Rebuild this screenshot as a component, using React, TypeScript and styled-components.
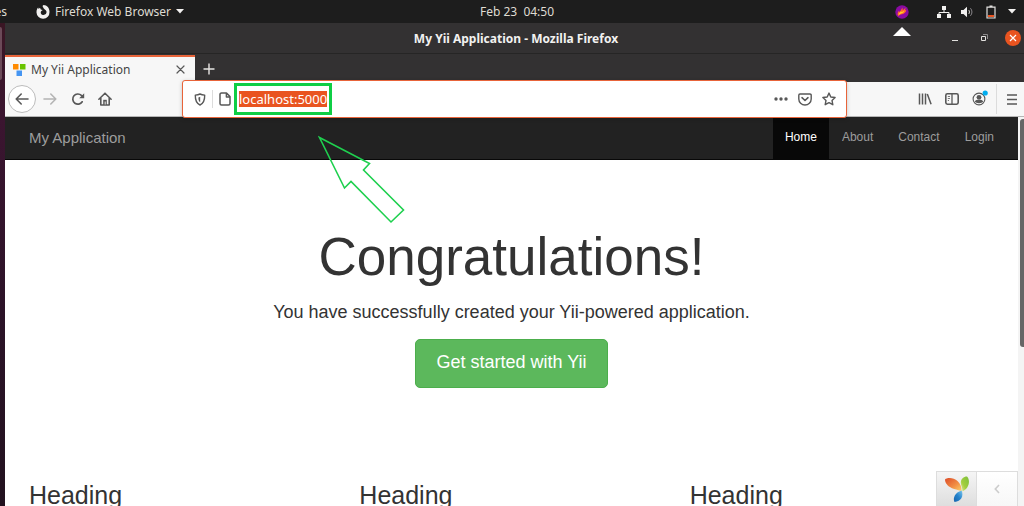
import React from "react";
import styled, { createGlobalStyle } from "styled-components";

const GlobalStyle = createGlobalStyle`
  *, *::before, *::after { box-sizing: border-box; }
  body { margin: 0; background: #fff; }
  button, input { font: inherit; }
`;

const uiFont = `"Noto Sans", "Open Sans", sans-serif`;
const pageFont = `"Liberation Sans", Arial, sans-serif`;

const Desktop = styled.div`
  position: relative;
  display: flex;
  flex-direction: column;
  height: 100vh;
  overflow: hidden;
  font-family: ${uiFont};
  font-size: 12px;
`;

const PanelBar = styled.header`
  display: grid;
  grid-template-columns: 1fr auto 1fr;
  align-items: center;
  flex: none;
  height: 23px;
  padding: 0 8px 0 0;
  background: #1d1d1d;
  color: #dfdbd2;
`;

const PanelSide = styled.div<{ $end?: boolean }>`
  display: flex;
  align-items: center;
  justify-content: ${(p) => (p.$end ? "flex-end" : "flex-start")};
`;

const Activities = styled.span`
  display: flex;
  justify-content: flex-end;
  width: 7px;
  overflow: hidden;
`;

const AppMenu = styled.button`
  display: flex;
  align-items: center;
  gap: 5px;
  margin-left: 29px;
  padding: 0;
  border: 0;
  background: none;
  color: inherit;
`;

const Clock = styled.time`
  margin-left: 18px;
  white-space: pre;
`;

const Tray = styled.div`
  display: flex;
  align-items: center;
  gap: 9px;
`;

const TrayApp = styled.span`
  position: relative;
  display: flex;
  margin-right: 19px;
`;

const TrayPointer = styled.svg`
  position: absolute;
  top: 22px;
  left: -2px;
  z-index: 3;
`;

const Workspace = styled.div`
  display: flex;
  flex: 1;
  min-height: 0;
`;

const Dock = styled.aside`
  flex: none;
  width: 5px;
  background: linear-gradient(#3a1624, #3b1530 20%, #2c1328 60%, #22121f);
`;

const DockHandle = styled.div`
  width: 2px;
  height: 53px;
  margin-top: 4px;
  border-radius: 0 2px 2px 0;
  background: #6b4a58;
`;

const Window = styled.main`
  display: flex;
  flex: 1;
  flex-direction: column;
  min-width: 0;
`;

const TitleBar = styled.div`
  display: grid;
  grid-template-columns: 1fr auto 1fr;
  align-items: center;
  flex: none;
  height: 31px;
  padding-right: 3px;
  border-bottom: 1px solid #262525;
  background: #333132;
  color: #f2f1f0;
  font-weight: 700;
`;

const WindowTitle = styled.span`
  grid-column: 2;
  margin-left: 6px;
`;

const WindowControls = styled.div`
  display: flex;
  align-items: center;
  justify-content: flex-end;
  gap: 13px;
`;

const WindowButton = styled.button<{ $close?: boolean }>`
  display: grid;
  place-items: center;
  width: 16px;
  height: 16px;
  padding: 0;
  border: 0;
  border-radius: 50%;
  background: ${(p) => (p.$close ? "#e95420" : "none")};
`;

const TabStrip = styled.div`
  display: flex;
  flex: none;
  height: 28px;
  padding-top: 1px;
  background: #333132;
`;

const Tab = styled.div`
  display: flex;
  align-items: center;
  width: 190px;
  padding: 0 7px 0 8px;
  border-top: 2px solid #e8643a;
  background: #f7f7f7;
  color: #444;
`;

const TabLabel = styled.span`
  flex: 1;
  margin-left: 5px;
`;

const IconButton = styled.button<{ $width?: number; $round?: boolean }>`
  display: grid;
  place-items: center;
  flex: none;
  width: ${(p) => p.$width ?? 27}px;
  height: 28px;
  padding: 0;
  border: ${(p) => (p.$round ? "1px solid #bcbcbc" : "0")};
  border-radius: ${(p) => (p.$round ? "50%" : "0")};
  background: ${(p) => (p.$round ? "#fff" : "none")};
  color: #585858;

  &:disabled { color: #b4b4b4; }
`;

const Toolbar = styled.div`
  display: flex;
  align-items: center;
  flex: none;
  height: 35px;
  padding-left: 3px;
  border-bottom: 1px solid #b5b5b5;
  background: #f7f7f7;
`;

const Divider = styled.span<{ $height: number }>`
  flex: none;
  width: 1px;
  height: ${(p) => p.$height}px;
  margin: 0 3px;
  background: #dcdcdc;
`;

const AddressBar = styled.form`
  display: flex;
  align-items: center;
  flex: 1;
  z-index: 2;
  height: 38px;
  margin: 0 64px;
  padding: 0 5px 0 8px;
  border: 1px solid #e8643a;
  border-radius: 3px;
  background: #fff;
  box-shadow: 0 1px 4px rgba(0, 0, 0, 0.2);
`;

const Highlight = styled.label`
  display: flex;
  align-items: center;
  justify-content: center;
  width: 98px;
  height: 32px;
  margin-right: auto;
  border: 3px solid #0fce45;
`;

const UrlInput = styled.input`
  width: 88px;
  height: 16px;
  padding: 0;
  border: 0;
  outline: 0;
  background: #e95420;
  color: #fff;
  font-size: 13px;
  line-height: 16px;
`;

const Content = styled.div`
  position: relative;
  display: flex;
  flex: 1;
  min-height: 0;
  background: #fff;
  color: #333;
  font-family: ${pageFont};
`;

const Page = styled.div`
  flex: 1;
  min-width: 0;
  overflow: hidden;
`;

const Scrollbar = styled.div`
  flex: none;
  width: 6px;
  padding: 2px 0 0 2px;
  background: #f4f4f4;
`;

const ScrollThumb = styled.div`
  height: 59%;
  border-radius: 3px 0 0 3px;
  background: #666;
`;

const Navbar = styled.nav`
  display: flex;
  align-items: center;
  justify-content: space-between;
  height: 43px;
  padding: 0 12px 0 24px;
  border-bottom: 1px solid #080808;
  background: #222;
`;

const Brand = styled.a`
  padding-bottom: 2px;
  color: #9d9d9d;
  font-size: 15px;
  text-decoration: none;
`;

const NavList = styled.ul`
  display: flex;
  gap: 1px;
  height: 100%;
  margin: 0;
  padding: 0;
  list-style: none;
`;

const NavLink = styled.a<{ $active?: boolean }>`
  display: flex;
  align-items: center;
  height: 100%;
  padding: 0 12px 2px;
  background: ${(p) => (p.$active ? "#080808" : "none")};
  color: ${(p) => (p.$active ? "#fff" : "#9d9d9d")};
  font-size: 12px;
  text-decoration: none;
`;

const Hero = styled.section`
  display: flex;
  align-items: center;
  flex-direction: column;
  padding: 67px 12px 91px;
`;

const HeroTitle = styled.h1`
  margin: 0;
  font-size: 53px;
  font-weight: 400;
  line-height: 60px;
`;

const Lead = styled.p`
  margin: 12px 0 14px;
  font-size: 18px;
  line-height: 26px;
`;

const HeroButton = styled.a`
  padding: 11px 20px 13px;
  border: 1px solid #4cae4c;
  border-radius: 5px;
  background: #5cb85c;
  color: #fff;
  font-size: 18px;
  line-height: 23px;
  text-decoration: none;
`;

const Columns = styled.div`
  display: grid;
  grid-template-columns: repeat(3, 1fr);
  padding: 0 10px 0 12px;
`;

const ColumnTitle = styled.h2`
  margin: 0;
  padding: 0 12px;
  font-size: 25px;
  font-weight: 400;
  line-height: 32px;
`;

const DebugBar = styled.div`
  position: absolute;
  right: 6px;
  bottom: 0;
  display: flex;
  height: 35px;
  border: 1px solid #ddd;
  border-bottom: 0;
`;

const DebugButton = styled.button<{ $logo?: boolean }>`
  display: grid;
  place-items: center;
  width: 40px;
  padding: 0;
  border: 0;
  border-right: ${(p) => (p.$logo ? "1px solid #ddd" : "0")};
  background: ${(p) => (p.$logo ? "linear-gradient(#f5f5f5, #dedede)" : "linear-gradient(#fff, #f7f7f7)")};
`;

const PointerArrow = styled.svg`
  position: absolute;
  top: 18px;
  left: 313px;
`;

const line = { fill: "none", stroke: "currentColor", strokeWidth: 1.6, strokeLinecap: "round", strokeLinejoin: "round" } as const;

const FirefoxMark = () => (
  <svg width="14" height="14" viewBox="0 0 14 14">
    <path d="M6.500 1 7.500 0C11 0 13.600 3 13.500 7A6.500 6.500 0 0 1 .5 7.500C.4 5 1.200 3.500 2.200 2.500L2.500 4 4 2.700 4.800 4.500 6.700 5 5.100 6.200C4 8.300 5.700 10 7.500 10c2 0 3.300-1.600 3-3.400C10.200 5 8.200 4.400 7.600 3.200Z" fill="#f2f1f0" />
  </svg>
);

const Caret = () => (
  <svg width="8" height="5" viewBox="0 0 8 5"><path d="M0 0h8L4 4.5Z" fill="#f2f1f0" /></svg>
);

const navItems = ["Home", "About", "Contact", "Login"];
const headings = ["Heading", "Heading", "Heading"];

export default function App() {
  return (
    <Desktop>
      <GlobalStyle />
      <PanelBar>
        <PanelSide>
          <Activities>es</Activities>
          <AppMenu>
            <FirefoxMark />
            <span>Firefox Web Browser</span>
            <Caret />
          </AppMenu>
        </PanelSide>
        <Clock>{"Feb 23  04:50"}</Clock>
        <PanelSide $end>
          <Tray>
            <TrayApp>
              <svg width="14" height="14" viewBox="0 0 14 14">
                <circle cx="7" cy="7" r="6.7" fill="#8b0ba3" />
                <path d="M3.200 11.200C1.800 8.800 3 7 4 5.800L4.700 7.200 7.400 2.600 7.800 5.200 10.600 2.800 10 5.200 11.300 4.800C11.300 7.500 9 8.800 7 9.200 5.200 9.500 4 10 3.200 11.200Z" fill="#ff6a2b" />
                <path d="M3.700 9.700C3.500 8.200 5 7.800 5.800 6.200 6.400 7.600 8.200 7 9.200 5.600 9.400 8 6.500 8.400 3.700 9.700Z" fill="#ffcf2c" />
              </svg>
              <TrayPointer width="18" height="9" viewBox="0 0 18 9"><path d="M9 0 18 9H0Z" fill="#fff" /></TrayPointer>
            </TrayApp>
            <svg width="14" height="12" viewBox="0 0 14 12">
              <path d="M5 0h4v4H5ZM0 8h4v4H0ZM10 8h4v4h-4Z" fill="#f2f1f0" />
              <path d="M7 4v2M2 8V6.500h10V8" fill="none" stroke="#f2f1f0" />
            </svg>
            <svg width="14" height="12" viewBox="0 0 14 12">
              <path d="M1 4h2.5L7 .8v10.400L3.500 8H1Z" fill="#f2f1f0" />
              <path d="M8.700 4c1 1 1 3 0 4" fill="none" stroke="#d8d5d0" />
              <path d="M10.400 2.200c2 2.200 2 5.400 0 7.600" fill="none" stroke="#89868a" />
            </svg>
            <svg width="16" height="14" viewBox="0 0 16 14">
              <path d="M4 2.200h8V13H4ZM6.500 1h3" fill="none" stroke="#e3e1df" strokeWidth="1.200" />
              <path d="M5 10h6v2H5Z" fill="#e95420" />
            </svg>
            <Caret />
          </Tray>
        </PanelSide>
      </PanelBar>

      <Workspace>
        <Dock><DockHandle /></Dock>
        <Window>
          <TitleBar>
            <WindowTitle>My Yii Application - Mozilla Firefox</WindowTitle>
            <WindowControls>
              <WindowButton aria-label="Minimize">
                <svg width="8" height="8" viewBox="0 0 8 8"><path d="M1 6.500h6" stroke="#e3e1df" /></svg>
              </WindowButton>
              <WindowButton aria-label="Restore">
                <svg width="8" height="8" viewBox="0 0 8 8"><path d="M1.500 2.500h4v4h-4Z" fill="none" stroke="#e3e1df" /><path d="M3 .5h4.500V5" fill="none" stroke="#8b898a" /></svg>
              </WindowButton>
              <WindowButton $close aria-label="Close window">
                <svg width="8" height="8" viewBox="0 0 8 8"><path d="m1 1 6 6M7 1 1 7" stroke="#fff" strokeWidth="1.200" /></svg>
              </WindowButton>
            </WindowControls>
          </TitleBar>

          <TabStrip>
            <Tab>
              <svg width="13" height="13" viewBox="0 0 13 13">
                <path d="M0 1h5.500v5.500H0Z" fill="#ff8a00" />
                <path d="M7 1h5.500v5.500H7Z" fill="#6ac400" />
                <path d="M3.500 7.500H9V13H3.500Z" fill="#4595f2" />
              </svg>
              <TabLabel>My Yii Application</TabLabel>
              <IconButton $width={16} aria-label="Close tab">
                <svg width="9" height="9" viewBox="0 0 9 9"><path d="m1 1 7 7M8 1 1 8" {...line} strokeWidth={1.200} /></svg>
              </IconButton>
            </Tab>
            <IconButton aria-label="New tab">
              <svg width="12" height="12" viewBox="0 0 12 12"><path d="M6 .5v11M.5 6h11" stroke="#e8e6e4" strokeWidth="1.400" /></svg>
            </IconButton>
          </TabStrip>

          <Toolbar>
            <IconButton $width={28} $round aria-label="Back">
              <svg width="14" height="14" viewBox="0 0 14 14"><path d="M13 7H1.200M6.200 2 1.200 7l5 5" {...line} /></svg>
            </IconButton>
            <IconButton $width={28} disabled aria-label="Forward">
              <svg width="14" height="14" viewBox="0 0 14 14"><path d="M1 7h11.800M7.800 2l5 5-5 5" {...line} /></svg>
            </IconButton>
            <IconButton aria-label="Reload">
              <svg width="14" height="14" viewBox="0 0 14 14"><path d="M11.200 9.800A5.100 5.100 0 1 1 10.400 3.400L12 4.600" {...line} strokeWidth={1.700} /><path d="M13.200 1.200v5H8.200Z" fill="currentColor" /></svg>
            </IconButton>
            <IconButton aria-label="Home">
              <svg width="14" height="14" viewBox="0 0 14 14"><path d="M.9 7.200 7 1.200l6.100 6M2.800 6v7h8.400V6" {...line} /><path d="M5.200 13V7.800h3.600V13Z" fill="currentColor" /><path d="M6.700 9.500h.9V12.500h-.9Z" fill="#fff" /></svg>
            </IconButton>

            <AddressBar>
              <IconButton type="button" $width={18} aria-label="Tracking protection">
                <svg width="12" height="13" viewBox="0 0 12 13"><path d="M6 1c1.600.8 3 1 4.700 1.100C10.800 7 10 10.400 6 12 2 10.400 1.200 7 1.300 2.100 3 2 4.400 1.800 6 1Z" {...line} strokeWidth={1.400} /><path d="M6.200 3.800v5.400C4.800 8.200 4.400 7 4.400 4.400Z" fill="currentColor" /></svg>
              </IconButton>
              <Divider $height={18} />
              <IconButton type="button" $width={18} aria-label="Site information">
                <svg width="12" height="14" viewBox="0 0 12 14"><path d="M2.600 1H7.500L11 4.500v7A1.500 1.500 0 0 1 9.500 13h-7A1.500 1.500 0 0 1 1 11.500v-9A1.500 1.500 0 0 1 2.600 1ZM7.400 1.200V5H11" {...line} strokeWidth={1.500} /></svg>
              </IconButton>
              <Highlight>
                <UrlInput aria-label="Address" defaultValue="localhost:5000" />
              </Highlight>
              <IconButton type="button" $width={24} aria-label="Page actions">
                <svg width="14" height="4" viewBox="0 0 14 4"><circle cx="2" cy="2" r="1.700" fill="currentColor" /><circle cx="7" cy="2" r="1.700" fill="currentColor" /><circle cx="12" cy="2" r="1.700" fill="currentColor" /></svg>
              </IconButton>
              <IconButton type="button" $width={24} aria-label="Save to Pocket">
                <svg width="14" height="13" viewBox="0 0 14 13"><path d="M2 1h10a1.200 1.200 0 0 1 1.200 1.200V6A6.200 6 0 0 1 .8 6V2.200A1.200 1.200 0 0 1 2 1Z" {...line} strokeWidth={1.400} /><path d="M4 4.700 7 7.500l3-2.800" {...line} /></svg>
              </IconButton>
              <IconButton type="button" $width={24} aria-label="Bookmark this page">
                <svg width="14" height="14" viewBox="0 0 14 14"><path d="m7 1.100 1.800 3.900 4.300.5L10 8.400l.8 4.300L7 10.600l-3.800 2.100L4 8.400.9 5.500 5.200 5Z" {...line} strokeWidth={1.400} /></svg>
              </IconButton>
            </AddressBar>

            <IconButton aria-label="Library">
              <svg width="14" height="12" viewBox="0 0 14 12"><path d="M1.500.5v11M4.500.5v11M7.500.5v11M9.300 1l3.800 10.300" fill="none" stroke="currentColor" strokeWidth="1.500" /></svg>
            </IconButton>
            <IconButton aria-label="Sidebars">
              <svg width="14" height="12" viewBox="0 0 14 12"><rect x=".8" y=".8" width="12.400" height="10.400" rx="1.600" {...line} /><path d="M7 1v10" stroke="currentColor" strokeWidth="1.300" /><path d="M2.800 3.500H5M2.800 5.500H5M2.800 7.500H4" stroke="currentColor" strokeWidth=".8" /></svg>
            </IconButton>
            <IconButton $width={28} aria-label="Account">
              <svg width="18" height="18" viewBox="0 0 18 18"><circle cx="9" cy="9" r="5.900" {...line} strokeWidth={1.100} /><circle cx="9" cy="7.300" r="2.400" fill="currentColor" /><path d="M4.800 11.500c1-1.700 2-1.700 4.200-1.700s3.200 0 4.200 1.700C11.800 13.800 6.200 13.800 4.800 11.500Z" fill="currentColor" /><circle cx="15.200" cy="3" r="2.600" fill="#00adef" /></svg>
            </IconButton>
            <Divider $height={30} />
            <IconButton $width={24} aria-label="Open menu">
              <svg width="10" height="11" viewBox="0 0 10 11"><path d="M0 1h10M0 5.500h10M0 10h10" stroke="currentColor" strokeWidth="1.500" /></svg>
            </IconButton>
          </Toolbar>

          <Content>
            <Page>
              <Navbar>
                <Brand href="#">My Application</Brand>
                <NavList>
                  {navItems.map((item, i) => (
                    <li key={item}><NavLink href="#" $active={i === 0}>{item}</NavLink></li>
                  ))}
                </NavList>
              </Navbar>
              <Hero>
                <HeroTitle>Congratulations!</HeroTitle>
                <Lead>You have successfully created your Yii-powered application.</Lead>
                <HeroButton href="#">Get started with Yii</HeroButton>
              </Hero>
              <Columns>
                {headings.map((text, i) => <ColumnTitle key={i}>{text}</ColumnTitle>)}
              </Columns>
            </Page>
            <Scrollbar><ScrollThumb /></Scrollbar>
            <DebugBar>
              <DebugButton $logo aria-label="Yii debugger">
                <svg width="26" height="28" viewBox="0 0 26 28">
                  <defs>
                    <linearGradient id="leafRed" x1="0" y1="0" x2="1" y2="1"><stop offset="0" stopColor="#dd4c28" /><stop offset=".6" stopColor="#f29146" /><stop offset="1" stopColor="#fbd26a" /></linearGradient>
                    <linearGradient id="leafGreen" x1="1" y1="0" x2="0" y2="1"><stop offset="0" stopColor="#7cbf3c" /><stop offset=".6" stopColor="#a3ce3e" /><stop offset="1" stopColor="#e9ec9c" /></linearGradient>
                    <linearGradient id="leafBlue" x1="1" y1="0" x2="0" y2="1"><stop offset="0" stopColor="#7cc6ee" /><stop offset=".5" stopColor="#2583cc" /><stop offset="1" stopColor="#1663ac" /></linearGradient>
                  </defs>
                  <path d="M1 4.500C3 2.200 10 2.500 13.500 6c3 3 4.300 6 4 10C13 14.500 11 14.500 8 13.200 3.500 11 1 8 1 4.500Z" fill="url(#leafRed)" />
                  <path d="M23 1.500C26.500 5 25.500 13 18.500 16.500 18.700 13 16.800 10.500 16.800 7.500 17 4 19.500 1.500 23 1.500Z" fill="url(#leafGreen)" />
                  <path d="M17.600 15.500C20 21 17 26.500 10.500 27 8.500 23 11 17.500 17.600 15.500Z" fill="url(#leafBlue)" />
                </svg>
              </DebugButton>
              <DebugButton aria-label="Expand debug toolbar">
                <svg width="6" height="10" viewBox="0 0 6 10"><path d="M5 1 1.300 5 5 9" fill="none" stroke="#ccc" strokeWidth="1.600" /></svg>
              </DebugButton>
            </DebugBar>
            <PointerArrow width="90" height="90" viewBox="0 0 90 90">
              <path d="M1.500 2.500 51.500 28.500 45.500 35 85.500 75 73 87 33 46.500 26.500 53Z" fill="none" stroke="#1fd04f" strokeWidth="1.600" />
            </PointerArrow>
          </Content>
        </Window>
      </Workspace>
    </Desktop>
  );
}
